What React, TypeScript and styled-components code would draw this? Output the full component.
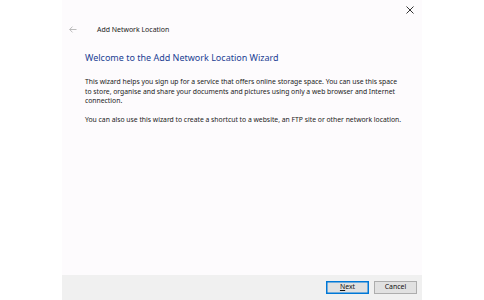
import styled, { createGlobalStyle } from 'styled-components';

const GlobalStyle = createGlobalStyle`
  html, body {
    margin: 0;
    padding: 0;
    background: #ffffff;
  }
  body {
    font-family: 'Noto Sans', 'Liberation Sans', sans-serif;
    color: #000;
  }
`;

const Page = styled.div`
  width: 484px;
  height: 300px;
  display: flex;
  justify-content: center;
`;

const Window = styled.div`
  width: 360px;
  height: 300px;
  background: #fdfbfd;
  display: flex;
  flex-direction: column;
`;

const CloseRow = styled.div`
  height: 20px;
  display: flex;
  justify-content: flex-end;
  align-items: center;
  padding-right: 4px;
`;

const CloseButton = styled.button`
  width: 16px;
  height: 16px;
  padding: 0;
  border: 0;
  background: transparent;
  display: flex;
  align-items: center;
  justify-content: center;
  color: #333;
`;

const TitleRow = styled.div`
  height: 18px;
  display: flex;
  align-items: center;
  padding-left: 4px;
`;

const BackButton = styled.button`
  width: 14px;
  height: 14px;
  padding: 0;
  border: 0;
  background: transparent;
  display: flex;
  align-items: center;
  justify-content: center;
  color: #b4b4b4;
  margin-right: 17px;
`;

const Title = styled.span`
  font-size: 6.95px;
  color: #1a1a1a;
`;

const Content = styled.div`
  flex: 1;
  padding: 12px 20px 0 23px;
`;

const Heading = styled.h1`
  margin: 0 0 12px;
  font-size: 9px;
  font-weight: 400;
  color: #1c3f94;
  line-height: 15px;
  white-space: nowrap;
`;

const Paragraph = styled.p`
  margin: 0 0 9.5px;
  font-size: 6.8px;
  line-height: 9.5px;
  color: #1a1a1a;
  white-space: nowrap;
`;

const Footer = styled.div`
  height: 25px;
  background: #f0f0f0;
  display: flex;
  justify-content: flex-end;
  align-items: center;
  gap: 5px;
  padding-right: 5px;
`;

const Button = styled.button<{ primary?: boolean }>`
  width: 43px;
  height: 13px;
  padding: 0;
  font-family: inherit;
  font-size: 6.9px;
  line-height: 1;
  color: #111;
  background: #e1e1e1;
  border: 1px solid ${(p) => (p.primary ? '#0078d7' : '#adadad')};
  box-shadow: ${(p) => (p.primary ? 'inset 0 0 0 0.5px #0078d7' : 'none')};
  u {
    text-decoration: underline;
  }
`;

export default function App() {
  return (
    <Page>
      <GlobalStyle />
      <Window>
        <CloseRow>
          <CloseButton aria-label="Close">
            <svg width="8" height="8" viewBox="0 0 8 8">
              <path d="M0.5 0.5 L7.5 7.5 M7.5 0.5 L0.5 7.5" stroke="currentColor" strokeWidth="1" />
            </svg>
          </CloseButton>
        </CloseRow>
        <TitleRow>
          <BackButton aria-label="Back">
            <svg width="8" height="7" viewBox="0 0 8 7">
              <path d="M7.5 3.5 H0.8 M3.5 0.6 L0.7 3.5 L3.5 6.4" stroke="currentColor" strokeWidth="0.9" fill="none" />
            </svg>
          </BackButton>
          <Title>Add Network Location</Title>
        </TitleRow>
        <Content>
          <Heading>Welcome to the Add Network Location Wizard</Heading>
          <Paragraph>
            This wizard helps you sign up for a service that offers online storage space. You can use this space
            <br />
            to store, organise and share your documents and pictures using only a web browser and Internet
            <br />
            connection.
          </Paragraph>
          <Paragraph>
            You can also use this wizard to create a shortcut to a website, an FTP site or other network location.
          </Paragraph>
        </Content>
        <Footer>
          <Button primary>
            <u>N</u>ext
          </Button>
          <Button>Cancel</Button>
        </Footer>
      </Window>
    </Page>
  );
}
